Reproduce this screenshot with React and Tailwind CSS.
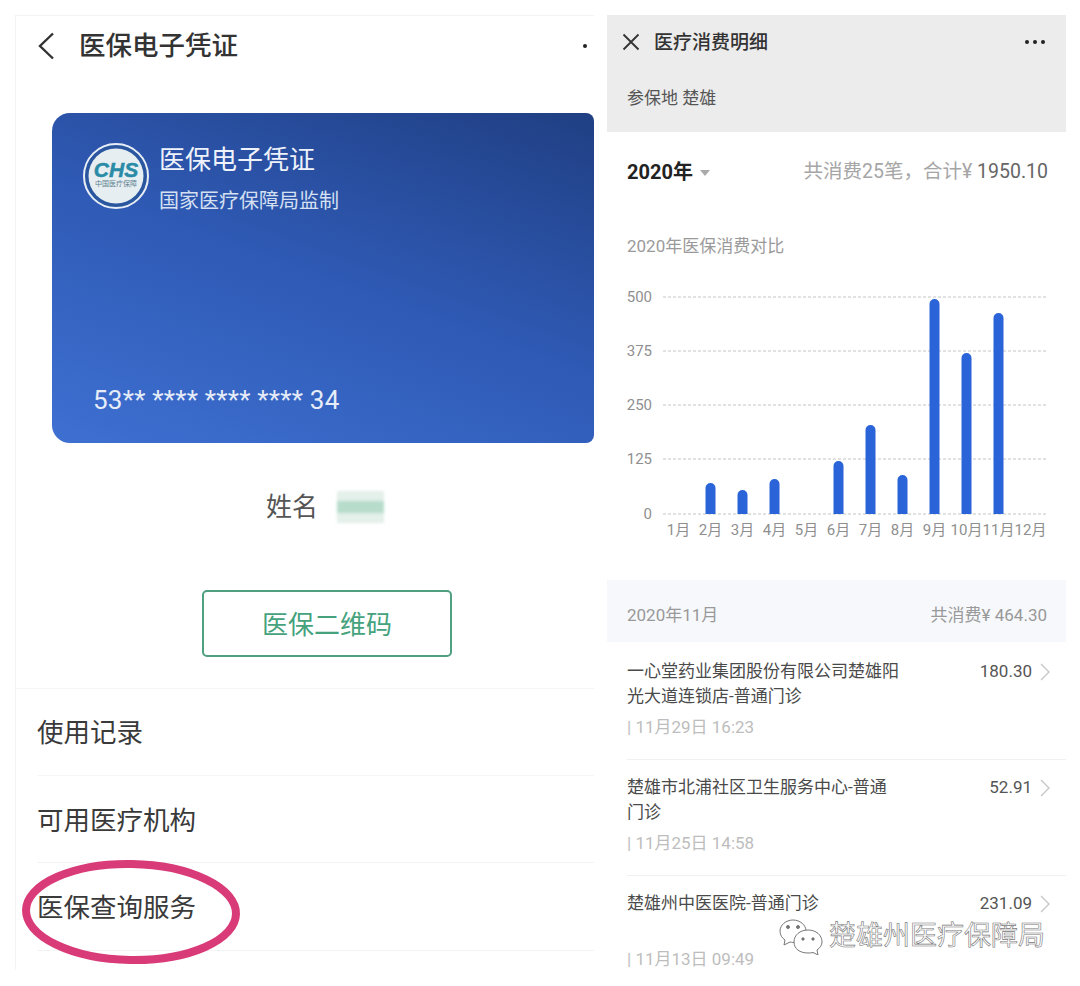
const chartBars = [
  { x: 710.5, top: 483 },
  { x: 742.5, top: 490 },
  { x: 774.5, top: 479 },
  { x: 838.5, top: 461 },
  { x: 870.5, top: 425 },
  { x: 902.5, top: 475 },
  { x: 934.5, top: 299 },
  { x: 966.5, top: 353 },
  { x: 998.5, top: 313 },
];

const gridLines = [
  { label: "500", y: 297 },
  { label: "375", y: 351 },
  { label: "250", y: 405 },
  { label: "125", y: 459 },
  { label: "0", y: 514 },
];

const months = ["1月", "2月", "3月", "4月", "5月", "6月", "7月", "8月", "9月", "10月", "11月", "12月"];

const records = [
  { name: ["一心堂药业集团股份有限公司楚雄阳", "光大道连锁店-普通门诊"], amount: "180.30", date: "11月29日 16:23" },
  { name: ["楚雄市北浦社区卫生服务中心-普通", "门诊"], amount: "52.91", date: "11月25日 14:58" },
  { name: ["楚雄州中医医院-普通门诊"], amount: "231.09", date: "11月13日 09:49" },
];

function BarChart() {
  // drawn in page coordinates, so the viewBox starts where the chart sits
  return (
    <svg viewBox="607 280 459 270" className="block h-[270px] w-[459px]">
      {gridLines.map((line) => (
        <g key={line.label}>
          <line x1="663" x2="1048" y1={line.y} y2={line.y} stroke="#c4c4c4" strokeWidth="1" strokeDasharray="3 2" />
          <text x="652" y={line.y + 5} textAnchor="end" fontSize="15" fill="#8f8f8f">
            {line.label}
          </text>
        </g>
      ))}
      {chartBars.map((bar) => (
        <path
          key={bar.x}
          d={`M${bar.x - 5} 514V${bar.top + 5}a5 5 0 0 1 10 0V514z`}
          fill="#2a64d8"
        />
      ))}
      {months.map((month, index) => (
        <text key={month} x={678.5 + index * 32} y="535" textAnchor="middle" fontSize="15" fill="#8f8f8f">
          {month}
        </text>
      ))}
    </svg>
  );
}

function RecordRow({ record, last }) {
  return (
    <div className={`ml-5 h-[116px] ${last ? "" : "border-b border-[#f1f1f1]"}`}>
      <div className="flex justify-between pr-4 pt-[15px]">
        <div className="text-[17px] leading-[25px] text-[#4a4a4a]">
          {record.name.map((line) => (
            <div key={line}>{line}</div>
          ))}
        </div>
        <div className="flex h-[25px] items-center gap-2 text-[17px] text-[#555]">
          <span>{record.amount}</span>
          <svg width="10" height="18" viewBox="0 0 10 18" fill="none" stroke="#c8c8c8" strokeWidth="1.4">
            <path d="M1 1l8 8-8 8" />
          </svg>
        </div>
      </div>
      <div className={`text-[17px] leading-[24px] text-[#bdbdbd] ${last ? "mt-[31px]" : "mt-[6px]"}`}>| {record.date}</div>
    </div>
  );
}

function ChsLogo() {
  return (
    <svg width="66" height="66" viewBox="0 0 66 66" className="shrink-0">
      <circle cx="33" cy="33" r="32" fill="#2a569f" stroke="#e8eef6" strokeWidth="2" />
      <circle cx="33" cy="33" r="27.5" fill="#e6eef2" />
      <text x="33" y="34" textAnchor="middle" fontSize="21" fontWeight="800" fontStyle="italic" fill="#2a8ba6" stroke="#2a8ba6" strokeWidth="0.5" fontFamily="'Liberation Sans', sans-serif">
        CHS
      </text>
      <text x="33" y="43" textAnchor="middle" fontSize="7" fill="#5c7f8e">
        中国医疗保障
      </text>
    </svg>
  );
}

function Wechat() {
  return (
    <svg width="44" height="36" viewBox="0 0 44 36" fill="#fff" stroke="#777" strokeWidth="1">
      <path d="M14 1C7 1 1 6 1 12c0 4 2 7 5 9l-1 5 6-3c2 .5 4 .5 5 .5C22 23.500 27 18 27 12 27 6 21 1 14 1z" />
      <path d="M29 11c-8 0-14 5-14 12s6 11 14 11c2 0 3 0 5-.5l5 2.500-1-5c3-2 5-5 5-8 0-7-6-12-14-12z" />
      <circle cx="9" cy="8" r="1.500" fill="#777" />
      <circle cx="19" cy="8" r="1.500" fill="#777" />
      <circle cx="24" cy="20" r="1.200" fill="#777" />
      <circle cx="34" cy="20" r="1.200" fill="#777" />
    </svg>
  );
}

export default function App() {
  return (
    <div
      className="relative flex h-[986px] w-[1080px] gap-[13px] overflow-hidden bg-white pl-[15px] pt-[15px]"
      style={{ fontFamily: "Roboto, 'Noto Sans CJK SC', sans-serif" }}
    >
      {/* left phone: e-voucher */}
      <div className="relative h-[955px] w-[579px] shrink-0 border-l border-t border-[#f3f3f3]">
        <div className="flex h-[60px] items-center justify-between pl-[21px] pr-[7px]">
          <div className="flex items-center gap-[24px]">
            <svg width="18" height="28" viewBox="0 0 18 28" fill="none" stroke="#333" strokeWidth="2.4">
              <path d="M16 1.500L3 14l13 12.500" />
            </svg>
            <span className="text-[26.5px] font-medium leading-[32px] text-[#333]">医保电子凭证</span>
          </div>
          <span className="h-1 w-1 rounded-full bg-[#222]" />
        </div>

        <div className="ml-[36px] mt-[37px] h-[330px] w-[542px] rounded-l-[18px] rounded-r-[8px] bg-[linear-gradient(20deg,#3e70d2_0%,#2f5ab5_50%,#203f83_100%)] pl-[31px] pt-[31px] text-white">
          <div className="-mt-[1px] flex gap-[10px]">
            <ChsLogo />
            <div className="pt-[1px]">
              <div className="text-[26px] leading-[32px] text-[#eef2fa]">医保电子凭证</div>
              <div className="mt-[12px] text-[20px] leading-[26px] text-[#d5e0f3]">国家医疗保障局监制</div>
            </div>
          </div>
          <div className="mt-[170px] pl-[10px] text-[26px] leading-[32px] tracking-[0.25px] text-[#e6ecf8]">
            53** **** **** **** 34
          </div>
        </div>

        <div className="mt-[47px] flex h-[34px] items-center pl-[250px]">
          <span className="text-[26px] leading-[34px] text-[#555]">姓名</span>
          <div className="relative ml-[19px] h-[32px] w-[47px] bg-[#e4f0ea] blur-[1.5px]">
            <div className="mt-[10px] h-[12px] bg-[#b7dccb]" />
          </div>
        </div>

        <div className="ml-[186px] mt-[66px] flex h-[67px] w-[250px] items-center justify-center rounded-[5px] border-2 border-[#4f9f80] pt-[3px] text-[26px] text-[#45a27c]">
          医保二维码
        </div>

        <div className="mt-[31px] border-t border-[#f5f5f5] pl-[21px] text-[26.5px] text-[#3a3a3a]">
          <div className="flex h-[87px] items-center border-b border-[#f6f6f6] pt-[2px]">使用记录</div>
          <div className="flex h-[87px] items-center border-b border-[#f3f3f3] pt-[3px]">可用医疗机构</div>
          <div className="flex h-[88px] items-center border-b border-[#f3f3f3] pt-[3px]">医保查询服务</div>
        </div>

        {/* hand-drawn marker over the last row */}
        <svg width="226" height="112" viewBox="0 0 226 112" fill="none" className="absolute left-[2px] top-[840px]">
          <ellipse cx="113" cy="56" rx="105" ry="48" stroke="#d93a78" strokeWidth="8" transform="rotate(1 113 56)" />
        </svg>
      </div>

      {/* right phone: spending details */}
      <div className="relative h-[955px] w-[459px] shrink-0 overflow-hidden">
        <div className="h-[117px] bg-[#ececec]">
          <div className="flex h-[54px] items-center justify-between pl-[15px] pr-[21px]">
            <div className="flex items-center gap-[14px]">
              <svg width="18" height="18" viewBox="0 0 18 18" fill="none" stroke="#333" strokeWidth="1.8">
                <path d="M1.500 1.500l15 15M16.500 1.500l-15 15" />
              </svg>
              <span className="pt-[2px] text-[19px] font-medium leading-[26px] text-[#333]">医疗消费明细</span>
            </div>
            <div className="flex gap-[4px]">
              <span className="h-1 w-1 rounded-full bg-[#222]" />
              <span className="h-1 w-1 rounded-full bg-[#222]" />
              <span className="h-1 w-1 rounded-full bg-[#222]" />
            </div>
          </div>
          <div className="mt-[17px] pl-5 text-[17px] leading-[24px] text-[#555]">参保地 楚雄</div>
        </div>

        <div className="flex h-[78px] items-center justify-between pl-5 pr-[18px] pt-[2px]">
          <div className="flex items-center gap-[7px]">
            <span className="text-[20px] font-bold text-[#222]">2020年</span>
            <span className="mt-[2px] h-0 w-0 border-x-[5px] border-t-[6px] border-x-transparent border-t-[#aaa]" />
          </div>
          <div className="text-[19.5px] text-[#a6a6a6]">
            共消费25笔，合计¥ <span className="text-[#666]">1950.10</span>
          </div>
        </div>

        <div className="pl-5 pt-[24px] text-[17px] leading-[24px] text-[#9a9a9a]">2020年医保消费对比</div>

        <div className="mb-[30px] mt-[22px]">
          <BarChart />
        </div>

        <div className="flex h-[62px] items-center justify-between bg-[#f6f8fb] pl-5 pr-[19px] pt-[10px] text-[17px] text-[#999]">
          <span>2020年11月</span>
          <span>共消费¥ 464.30</span>
        </div>

        <div className="pt-[2px]">
          {records.map((record, index) => (
            <RecordRow key={record.date} record={record} last={index === records.length - 1} />
          ))}
        </div>

        {/* account watermark sits on top of the list */}
        <div className="absolute left-[172px] top-[904px] flex items-center gap-[6px]">
          <Wechat />
          <span className="-mt-[2px] text-[27px] leading-[34px] text-white [-webkit-text-stroke:0.6px_#777]">楚雄州医疗保障局</span>
        </div>
      </div>
    </div>
  );
}
